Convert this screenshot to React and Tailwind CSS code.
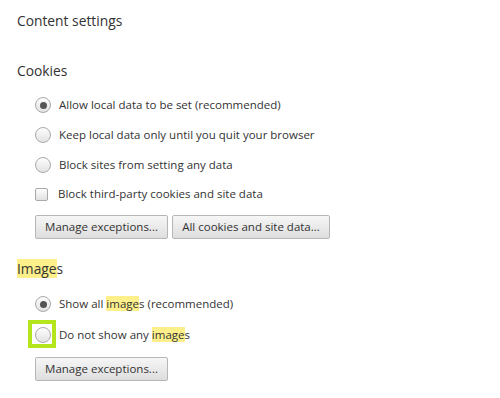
import React from "react";

function Radio({ checked }) {
  return (
    <span className="w-4 h-4 rounded-full border border-[#a9a9a9] bg-gradient-to-b from-[#fdfdfd] to-[#e2e2e2] flex items-center justify-center shrink-0">
      {checked && <span className="w-[7px] h-[7px] rounded-full bg-[#555]" />}
    </span>
  );
}

function Hl({ children }) {
  return <span className="bg-[#fdf08b]">{children}</span>;
}

function Btn({ children, w }) {
  return (
    <button
      type="button"
      className={`h-6 rounded-[2px] border border-[#b6b6b6] bg-gradient-to-b from-[#f6f6f6] to-[#dedede] text-[#333] text-[11.5px] px-0 ${w}`}
    >
      {children}
    </button>
  );
}

export default function App() {
  return (
    <div
      className="w-[500px] h-[398px] bg-white text-[#333] pl-[17px]"
      style={{ fontFamily: '"Open Sans", "Noto Sans", sans-serif' }}
    >
      <div className="pt-[10px] text-[13.8px] leading-[22px]">Content settings</div>

      <div className="mt-[28px] text-[13.8px] leading-[22px]">Cookies</div>

      <div className="pl-[18px] text-[11.5px]">
        <div className="mt-[15px] h-[16px] flex items-center gap-2">
          <Radio checked />
          <span>Allow local data to be set (recommended)</span>
        </div>
        <div className="mt-[14px] h-[16px] flex items-center gap-2">
          <Radio />
          <span>Keep local data only until you quit your browser</span>
        </div>
        <div className="mt-[14px] h-[16px] flex items-center gap-2">
          <Radio />
          <span>Block sites from setting any data</span>
        </div>
        <div className="mt-[13px] h-[16px] flex items-center gap-[10px]">
          <span className="w-[13px] h-[13px] rounded-[2px] border border-[#a9a9a9] bg-gradient-to-b from-[#fdfdfd] to-[#e2e2e2] shrink-0" />
          <span>Block third-party cookies and site data</span>
        </div>
        <div className="mt-[13px] flex gap-[4px]">
          <Btn w="w-[133px]">Manage exceptions...</Btn>
          <Btn w="w-[158px]">All cookies and site data...</Btn>
        </div>
      </div>

      <div className="mt-[20px] text-[13.8px] leading-[19px]">
        <span className="bg-[#fdf08b]">Image</span>s
      </div>

      <div className="pl-[18px] text-[11.5px]">
        <div className="mt-[18px] h-[16px] flex items-center gap-2">
          <Radio checked />
          <span>
            Show all <Hl>image</Hl>s (recommended)
          </span>
        </div>
        <div className="mt-[15px] h-[16px] flex items-center gap-2 relative">
          <span className="absolute left-[-7px] top-[-7px] w-[28px] h-[28px] border-4 border-[#b5e61d]" />
          <Radio />
          <span>
            Do not show any <Hl>image</Hl>s
          </span>
        </div>
        <div className="mt-[14px] flex">
          <Btn w="w-[133px]">Manage exceptions...</Btn>
        </div>
      </div>
    </div>
  );
}
